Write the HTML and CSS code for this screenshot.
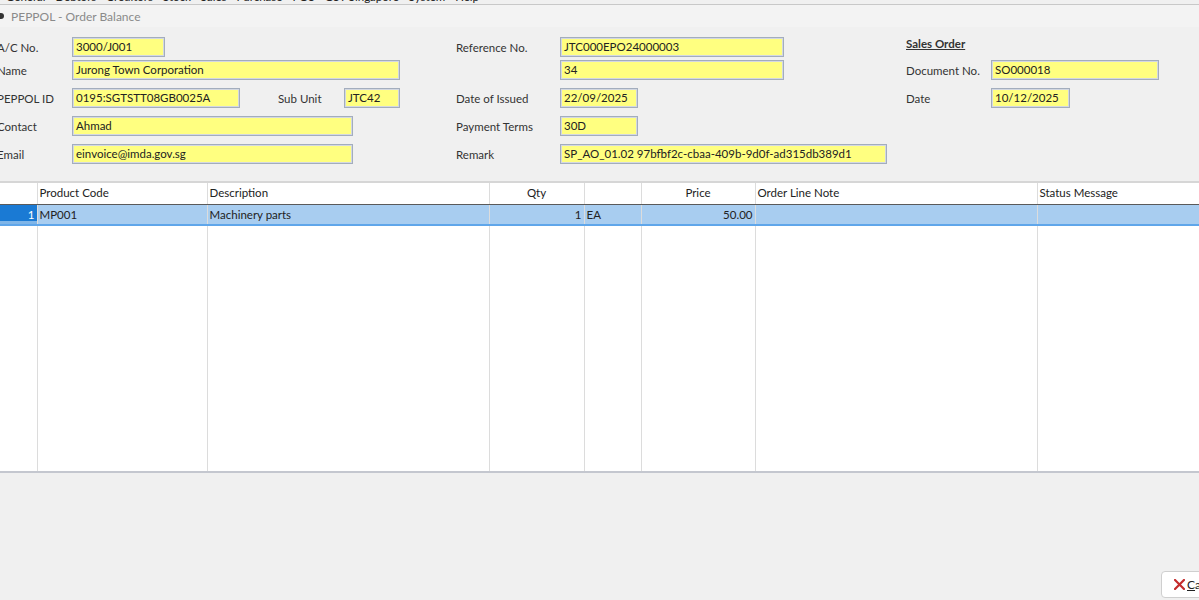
FILE: index.html
```html
<!DOCTYPE html>
<html lang="en">
<head>
  <meta charset="UTF-8">
  <title>PEPPOL - Order Balance</title>
  <link rel="stylesheet" href="styles.css">
</head>
<body>
  <div class="menubar">
    <div class="menu-items">
      <span>General</span><span>Debtors</span><span>Creditors</span><span>Stock</span><span>Sales</span><span>Purchase</span><span>POS</span><span>GST Singapore</span><span>System</span><span>Help</span>
    </div>
  </div>
  <div class="titlebar"><span class="dot"></span>PEPPOL - Order Balance</div>

  <div class="form">
    <div class="col col-left">
      <div class="row"><label>A/C No.</label><div class="field w93">3000/J001</div></div>
      <div class="row tight"><label>Name</label><div class="field w328">Jurong Town Corporation</div></div>
      <div class="row">
        <label>PEPPOL ID</label><div class="field w168">0195:SGTSTT08GB0025A</div>
        <label class="sub-label">Sub Unit</label><div class="field w56">JTC42</div>
      </div>
      <div class="row"><label>Contact</label><div class="field w281">Ahmad</div></div>
      <div class="row"><label>Email</label><div class="field w281">einvoice@imda.gov.sg</div></div>
    </div>

    <div class="col col-mid">
      <div class="row"><label>Reference No.</label><div class="field w224">JTC000EPO24000003</div></div>
      <div class="row tight"><label></label><div class="field w224">34</div></div>
      <div class="row"><label>Date of Issued</label><div class="field w78">22/09/2025</div></div>
      <div class="row"><label>Payment Terms</label><div class="field w78">30D</div></div>
      <div class="row"><label>Remark</label><div class="field w327">SP_AO_01.02 97bfbf2c-cbaa-409b-9d0f-ad315db389d1</div></div>
    </div>

    <div class="col col-right">
      <div class="row"><span class="section-title">Sales Order</span></div>
      <div class="row tight"><label>Document No.</label><div class="field w168">SO000018</div></div>
      <div class="row"><label>Date</label><div class="field w79">10/12/2025</div></div>
    </div>
  </div>

  <div class="grid-wrap">
    <table class="grid">
      <colgroup>
        <col style="width:37px"><col style="width:170px"><col style="width:282px"><col style="width:95px">
        <col style="width:57px"><col style="width:114px"><col style="width:282px"><col>
      </colgroup>
      <thead>
        <tr>
          <th></th>
          <th>Product Code</th>
          <th>Description</th>
          <th class="center">Qty</th>
          <th></th>
          <th class="center">Price</th>
          <th>Order Line Note</th>
          <th>Status Message</th>
        </tr>
      </thead>
      <tbody>
        <tr class="selected">
          <td class="rownum">1</td>
          <td>MP001</td>
          <td>Machinery parts</td>
          <td class="num">1</td>
          <td>EA</td>
          <td class="num">50.00</td>
          <td></td>
          <td></td>
        </tr>
        <tr class="filler">
          <td></td><td></td><td></td><td></td><td></td><td></td><td></td><td></td>
        </tr>
      </tbody>
    </table>
  </div>

  <div class="footer">
    <button class="btn-cancel">
      <svg class="x" width="11" height="11" viewBox="0 0 11 11"><path d="M1 1 L10 10 M10 1 L1 10" stroke="#c42b2b" stroke-width="2.2" stroke-linecap="square"/></svg>
      <span><u>C</u>ancel</span>
    </button>
  </div>
</body>
</html>
```

FILE: styles.css
```css
* {
  margin: 0;
  padding: 0;
  box-sizing: border-box;
}

html, body {
  width: 1199px;
  height: 600px;
  overflow: hidden;
}

body {
  font-family: 'Lato', 'Noto Sans', sans-serif;
  font-size: 11.5px;
  color: #222;
  background-color: #f0f0f0;
}

/* Menu bar (mostly cut off at the top) */
.menubar {
  height: 5px;
  overflow: hidden;
  background-color: #f0f0f0;
  border-bottom: 1px solid #c8c8c8;
}

.menu-items {
  display: flex;
  gap: 10px;
  padding-left: 6px;
  margin-top: -10px;
  font-size: 11.5px;
  line-height: 14px;
  white-space: nowrap;
  color: #222;
}

.titlebar {
  height: 22px;
  background-color: #f3f3f3;
  color: #8a8a8a;
  font-size: 12px;
  display: flex;
  align-items: center;
}

.dot {
  display: inline-block;
  width: 4px;
  height: 6px;
  border-radius: 0 3px 3px 0;
  background-color: #333;
  margin-right: 7px;
}

/* Header form */
.form {
  display: grid;
  grid-template-columns: 456px 450px 1fr;
  height: 154px;
  padding-top: 10px;
}

.col {
  display: flex;
  flex-direction: column;
}

.row {
  display: flex;
  align-items: center;
  height: 20px;
  margin-top: 8px;
}

.row:first-child {
  margin-top: 0;
}

.row.tight {
  margin-top: 3px;
}

.col-left label { width: 75px; margin-left: -3px; }
.col-mid label { width: 104px; }
.col-right label { width: 85px; }

.col-left .sub-label {
  width: 66px;
  margin-left: 38px;
}

label {
  flex-shrink: 0;
  color: #333;
}

.field {
  height: 20px;
  line-height: 18px;
  padding-left: 3px;
  background-color: #ffff80;
  border: 1px solid #a3adbd;
  box-shadow: inset 0 0 0 1px #d3d8e2;
  white-space: nowrap;
  overflow: hidden;
  color: #222;
}

.w56 { width: 56px; }
.w78 { width: 78px; }
.w79 { width: 79px; }
.w93 { width: 93px; }
.w168 { width: 168px; }
.w224 { width: 224px; }
.w281 { width: 281px; }
.w327 { width: 327px; }
.w328 { width: 328px; }

.section-title {
  font-weight: bold;
  text-decoration: underline;
  color: #333;
  margin-top: -8px;
}

/* Line grid */
.grid-wrap {
  border-top: 2px solid #d6d6d6;
  border-bottom: 2px solid #c4c7cf;
  background-color: #fff;
  height: 292px;
  overflow: hidden;
}

.grid {
  width: 1199px;
  table-layout: fixed;
  border-collapse: collapse;
}

.grid th,
.grid td {
  height: 21px;
  padding: 0 2px;
  border-left: 1px solid #dcdcdc;
  white-space: nowrap;
  overflow: hidden;
  text-align: left;
  font-weight: normal;
  color: #222;
}

.grid th {
  padding-bottom: 2px;
}

.grid th:first-child,
.grid td:first-child {
  border-left: none;
}

.grid thead th {
  border-bottom: 1px solid #5a5a5a;
}

.grid th.center { text-align: center; }
.grid td.num { text-align: right; }

.grid tr.selected td {
  background-color: #a8cdf0;
  border-bottom: 2px solid #5fa6ea;
  height: 21px;
}

.grid tr.selected td.rownum {
  background-color: #1a7ad4;
  color: #fff;
  text-align: right;
  box-shadow: inset 0 -3px 0 #7fb5e8;
}

.grid tr.filler td {
  height: 246px;
}

/* Footer buttons */
.footer {
  display: flex;
  justify-content: flex-end;
  padding-top: 98px;
}

.btn-cancel {
  width: 76px;
  height: 27px;
  margin-right: -38px;
  background-color: #fff;
  border: 1px solid #cfcfcf;
  border-radius: 4px;
  font-family: 'Lato', 'Noto Sans', sans-serif;
  font-size: 12px;
  color: #222;
  padding-left: 12px;
  display: flex;
  align-items: center;
  gap: 2px;
}
```
